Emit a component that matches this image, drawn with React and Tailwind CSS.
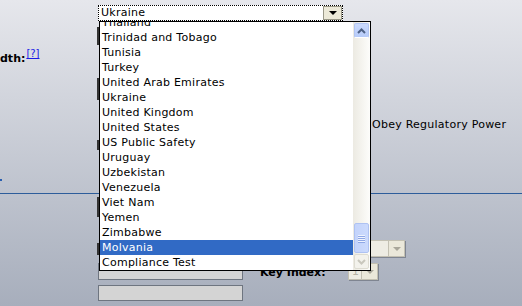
import React from "react";

const countries = [
  "Thailand",
  "Trinidad and Tobago",
  "Tunisia",
  "Turkey",
  "United Arab Emirates",
  "Ukraine",
  "United Kingdom",
  "United States",
  "US Public Safety",
  "Uruguay",
  "Uzbekistan",
  "Venezuela",
  "Viet Nam",
  "Yemen",
  "Zimbabwe",
  "Molvania",
  "Compliance Test",
];

const Chevron = ({ up, color }) => (
  <svg width="9" height="6" viewBox="0 0 9 6">
    <path
      d={up ? "M1 5 L4.5 1.5 L8 5" : "M1 1 L4.5 4.5 L8 1"}
      fill="none"
      stroke={color}
      strokeWidth="2"
    />
  </svg>
);

const DisabledSelect = ({ width, text }) => (
  <div
    className={`flex h-[17px] ${width} bg-[#eeece3] border border-[#c3c0b2] shadow-[1px_1px_0_#7f8591]`}
  >
    <span className="flex-1 pl-[3px] text-[#b5b2a6] leading-[15px] overflow-hidden">
      {text}
    </span>
    <div className="w-[16px] h-full flex items-center justify-center border-l border-[#c3c0b2] bg-[#ebe8da]">
      <div className="w-0 h-0 border-l-[4px] border-r-[4px] border-t-[4px] border-l-transparent border-r-transparent border-t-[#a9a69a]" />
    </div>
  </div>
);

const DropList = () => (
  <div className="absolute left-[99px] top-[21px] w-[272px] h-[250px] border border-black bg-white flex">
    <div className="flex-1 overflow-hidden">
      <div className="-mt-[7px]">
        {countries.map((c) => (
          <div
            key={c}
            className={`h-[15px] pt-px leading-[14px] pl-[2px] whitespace-nowrap ${
              c === "Molvania" ? "bg-[#316ac5] text-white" : "text-black"
            }`}
          >
            {c}
          </div>
        ))}
      </div>
    </div>
    <div className="w-[17px] h-full bg-gradient-to-r from-[#eceae2] to-[#fdfdfb] flex flex-col items-center pt-px pb-px">
      <div className="w-[15px] h-[15px] rounded-[2px] bg-gradient-to-b from-[#cbdafd] to-[#b6cbf9] border border-[#b1c5f3] border-b-white flex items-center justify-center">
        <Chevron up color="#4d6185" />
      </div>
      <div className="flex-1" />
      <div className="w-[15px] h-[30px] rounded-[2px] bg-gradient-to-r from-[#c3d3fb] to-[#cbdafd] border border-[#aec2f2] flex flex-col items-center justify-center gap-[1px]">
        {[0, 1, 2, 3].map((i) => (
          <div key={i} className="w-[7px] h-px bg-[#eef3ff] shadow-[0_1px_0_#8fa8e6]" />
        ))}
      </div>
      <div className="w-[15px] h-[15px] mt-px rounded-[2px] bg-[#f3f2ec] border border-[#dedcd2] flex items-center justify-center">
        <Chevron color="#c9c7bd" />
      </div>
    </div>
  </div>
);

export default function App() {
  return (
    <div className="relative w-[522px] h-[306px] overflow-hidden bg-gradient-to-b from-[#e6e7ec] to-[#a7aebc] font-['DejaVu_Sans',sans-serif] text-[11px] leading-[15px] tracking-[0.25px] text-black">
      <div className="h-[193px] flex flex-col">
        <div className="pl-[98px] pt-[5px]">
          <div className="w-[245px] h-[16px] bg-white border border-dotted border-black flex">
            <span className="flex-1 pl-[2px] leading-[14px]">Ukraine</span>
            <div className="w-[19px] h-[14px] bg-[#ece9d8] border border-[#9a9888] flex items-center justify-center">
              <div className="w-0 h-0 border-l-[4px] border-r-[4px] border-t-[4px] border-l-transparent border-r-transparent border-t-black" />
            </div>
          </div>
        </div>
        <div className="flex flex-1">
          <div className="w-[97px] flex flex-col">
            <div className="mt-[30px] font-bold leading-[15px] tracking-normal">
              dth:
              <sup className="text-[10px] font-normal text-[#1a1ae6] underline ml-px">[?]</sup>
            </div>
            <div className="mt-[113px] w-[2px] h-[2px] bg-[#2a5fb0]" />
          </div>
          <div className="w-[2px] flex flex-col">
            <div className="mt-[6px] h-[18px] bg-[#333]" />
            <div className="mt-[33px] h-[22px] bg-[#333]" />
            <div className="mt-[40px] h-[10px] bg-[#333]" />
          </div>
          <div className="pl-[273px] pt-[96px] whitespace-nowrap">Obey Regulatory Power</div>
        </div>
      </div>
      <div className="h-px bg-[#2d5d9b]" />
      <div className="flex">
        <div className="w-[97px]" />
        <div className="w-[146px] flex flex-col">
          <div className="mt-[3px] w-[2px] h-[20px] bg-[#333]" />
          <div className="mt-[26px] w-[2px] h-[12px] bg-[#333]" />
          <div className="mt-[8px] ml-px h-[17px] bg-[#d4d4d4] border border-[#6e7580]" />
          <div className="mt-[5px] ml-px h-[16px] bg-[#d4d4d4] border border-[#6e7580]" />
        </div>
        <div className="w-[105px] pl-[17px] pt-[71px] font-bold tracking-normal whitespace-nowrap">Key Index:</div>
        <div className="flex flex-col">
          <div className="mt-[46px]">
            <DisabledSelect width="w-[57px]" text="x" />
          </div>
          <div className="mt-[6px]">
            <DisabledSelect width="w-[30px]" text="1" />
          </div>
        </div>
      </div>
      <DropList />
    </div>
  );
}
